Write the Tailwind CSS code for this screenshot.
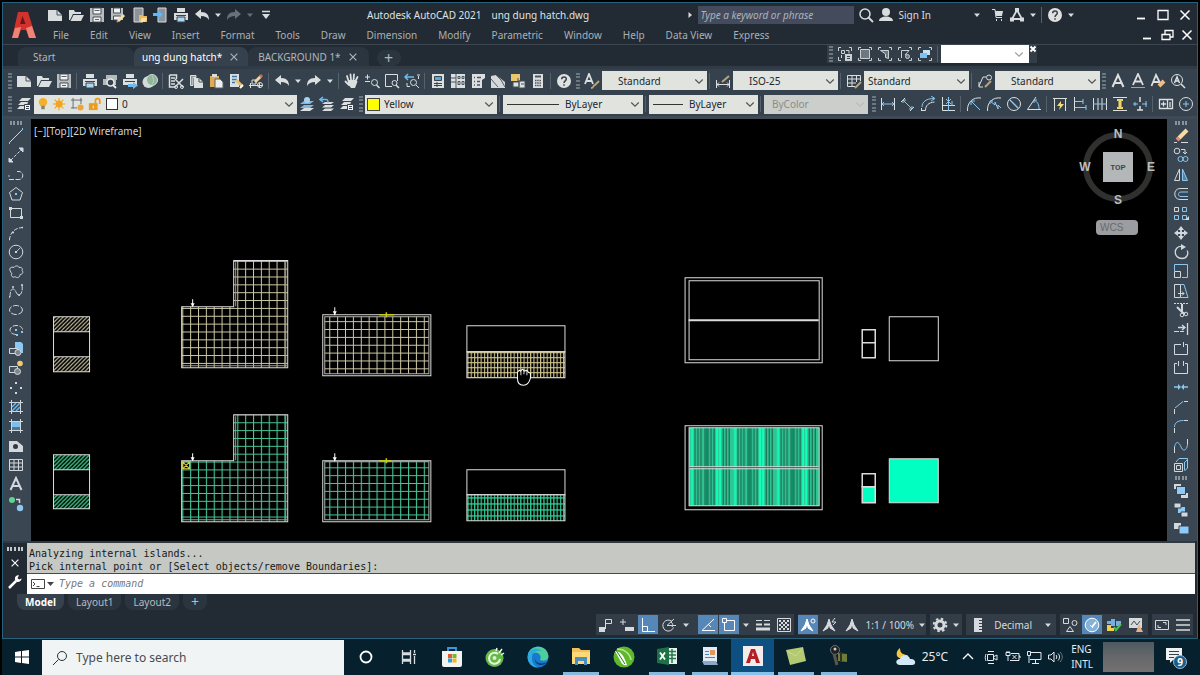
<!DOCTYPE html>
<html lang="en">
  <head>
    <meta charset="UTF-8" />
    <meta name="viewport" content="width=device-width, initial-scale=1.0" />
    <title>Autodesk AutoCAD 2021 - ung dung hatch.dwg</title>
    <script src="https://cdn.jsdelivr.net/npm/@tailwindcss/browser@4"></script>
  </head>
  <body class="flex h-screen flex-col overflow-hidden bg-black font-['Noto_Sans',sans-serif] text-[10px] leading-4 text-[#c3c7cb]">
    <!-- icon sheet -->
    <svg class="hidden" fill="none" stroke="currentColor">
      <symbol id="new" viewBox="0 0 16 16"><path d="M1 3h9l5 5v6H1z" fill="currentColor" stroke="none"/><path d="M10 3v5h5" stroke="#47515c"/></symbol>
      <symbol id="open" viewBox="0 0 16 16"><path d="M1 13V3h5l1 2h6v2H5l-3 6z" fill="currentColor" stroke="none"/><path d="M5.500 8H16l-3 6H2.500z" fill="currentColor" stroke="none"/></symbol>
      <symbol id="save" viewBox="0 0 16 16"><path d="M1 1h14v14H1z" fill="#b9bdc0" stroke="none"/><path d="M4 1h8v6H4zM4 10h8v5H4z" fill="#f1f3f3" stroke="#434c57"/><path d="M5.500 3.500h5M6 12.500h4" stroke="#59626b"/></symbol>
      <symbol id="saveas" viewBox="0 0 16 16"><path d="M1 1h12v12H1z" fill="#b9bdc0" stroke="none"/><path d="M3.500 1h7v5h-7zM3.500 9h7v4h-7z" fill="#f1f3f3" stroke="#434c57"/><path d="M8 14l6-6" stroke="#f3dfa8" stroke-width="3"/><path d="M7 15l1-1" stroke="#c96" stroke-width="2"/></symbol>
      <symbol id="openweb" viewBox="0 0 16 16"><path d="M3 1h9v14H3z" fill="#8c9399" stroke="#d9dcdd"/><path d="M8 8h3l1 1h4v6H8z" fill="#e8bd62" stroke="none"/><path d="M9 15l2-4h5l-2 4z" fill="#ffe09a" stroke="none"/></symbol>
      <symbol id="saveweb" viewBox="0 0 16 16"><path d="M6 1h8v14H6z" fill="#8c9399" stroke="#d9dcdd"/><path d="M1 6h5V3l5 4.500L6 12V9H1z" fill="#65b5ee" stroke="none"/></symbol>
      <symbol id="print" viewBox="0 0 16 16"><path d="M4 1h8v4H4zM1 6h14v7H1z" fill="currentColor" stroke="none"/><path d="M3 8.500h10" stroke="#38434e"/><path d="M4 10h8v5H4z" fill="#a9d8f5" stroke="#38434e"/></symbol>
      <symbol id="preview" viewBox="0 0 16 16"><path d="M4 2h11v5H4zM1 6h13v6H1z" fill="#b4b9bc" stroke="none"/><circle cx="8.500" cy="9.500" r="3.500" fill="#37424f" stroke="#e8eaea" stroke-width="1.500"/><path d="M11 12l3 3" stroke="#e8eaea" stroke-width="2"/></symbol>
      <symbol id="publish" viewBox="0 0 16 16"><path d="M4 1h8v4H4zM1 6h14v6H1z" fill="currentColor" stroke="none"/><path d="M3 8.500h10" stroke="#38434e"/><path d="M6 11h5V9l5 3.500-5 3.500v-2H6z" fill="#6dbaf0" stroke="none"/></symbol>
      <symbol id="globe" viewBox="0 0 16 16"><circle cx="6.500" cy="9" r="6" fill="#d3d9d7" stroke="none"/><circle cx="10" cy="7" r="5.500" fill="#8fb59a" stroke="#d5ded8"/><path d="M10 3c2 3 2 6 0 8" stroke="#b9d3c1"/></symbol>
      <symbol id="cut" viewBox="0 0 16 16"><path d="M1.500 2v12h6M1.500 2h7v4M3 5h4M3 8h4M3 11h4" stroke-width="1.500"/><path d="M7 6l8 8M15 6l-8 8" stroke-width="1.500"/><circle cx="14" cy="14" r="1.500"/><circle cx="8" cy="14" r="1.500"/></symbol>
      <symbol id="copy" viewBox="0 0 16 16"><path d="M2.500 2.500H8v2H5v8H2.500z" fill="#8d959c"/><path d="M6 5h5l4 4v6H6z" fill="currentColor" stroke="none"/><path d="M11 5v4h4" stroke="#47515c"/></symbol>
      <symbol id="paste" viewBox="0 0 16 16"><path d="M2 3h9v11H2z" fill="#e0ab54" stroke="none"/><path d="M4 1h5v3H4z" fill="#ddd" stroke="none"/><path d="M7 6h5l3 3v6H7z" fill="#edefef" stroke="#59626b"/></symbol>
      <symbol id="match" viewBox="0 0 16 16"><path d="M2 1h9v13H2z" fill="currentColor" stroke="none"/><path d="M4 3.500h5M4 6.500h5M4 9.500h3" stroke="#377aaa" stroke-width="1.500"/><path d="M8 7l6 6" stroke="#e8c06a" stroke-width="3"/><path d="M12 15l3-3" stroke="#fff" stroke-width="2"/></symbol>
      <symbol id="block" viewBox="0 0 16 16"><path d="M1 12.500h14M2.500 10v5M11.500 10v5M4 11V7h4v4z"/><circle cx="12" cy="12" r="2.500"/><path d="M7 9l6-6" stroke="#f0d7a0" stroke-width="3"/><path d="M12 4l2-2" stroke="#cf6b58" stroke-width="3"/></symbol>
      <symbol id="undo" viewBox="0 0 16 16"><path d="M1 7l6-5v3c6 0 8 3 8 8-2-3-4-4-8-4v3z" fill="currentColor" stroke="none"/></symbol>
      <symbol id="redo" viewBox="0 0 16 16"><path d="M15 7L9 2v3c-6 0-8 3-8 8 2-3 4-4 8-4v3z" fill="currentColor" stroke="none"/></symbol>
      <symbol id="pan" viewBox="0 0 16 16"><path d="M4.500 8L3 3M7 7L6.500 1.500M9.500 7l.5-5.500M11.500 8L13.500 4M1.500 8.500L5 12" stroke-width="1.800" stroke-linecap="round"/><path d="M4 7l8 0 1.500 1.500L11 15H7L4 11z" fill="currentColor" stroke="none"/></symbol>
      <symbol id="zoomrt" viewBox="0 0 16 16"><path d="M1 4h5M3.500 1.500v5M1 8.500h5"/><circle cx="10.500" cy="9.500" r="3"/><path d="M12.500 12l3 3" stroke-width="1.500"/></symbol>
      <symbol id="zoomwin" viewBox="0 0 16 16"><path d="M8 13.500H1.500v-12h12V8"/><circle cx="10.500" cy="10" r="2.500"/><path d="M12 12l3 3" stroke-width="1.500"/></symbol>
      <symbol id="zoomprev" viewBox="0 0 16 16"><path d="M1 4h9M4 1L1 4l3 3" stroke="#6dbaf0" stroke-width="1.500"/><path d="M3 10v3.500h3M14.500 6V3M13 2h3"/><circle cx="9.500" cy="9.500" r="3"/><path d="M12 12l3 3"/></symbol>
      <symbol id="props" viewBox="0 0 16 16"><path d="M2 1h12v14H2z" fill="currentColor" stroke="none"/><path d="M4.500 3.500h7v4h-7z" fill="#5ea5d8" stroke="#38434e"/><path d="M4 10.500h8M4 12.500h8M7 9v5" stroke="#38434e"/></symbol>
      <symbol id="dcenter" viewBox="0 0 16 16"><path d="M1 1h14v14H1z" fill="currentColor" stroke="none"/><path d="M6 1v14M1 5h5M1 9h5M8 3.500h2v2H8zM12 3.500h2v2h-2zM8 8.500h2v3H8zM12 8.500h2v3h-2z" stroke="#4a545e"/></symbol>
      <symbol id="palettes" viewBox="0 0 16 16"><path d="M2 1h13v4l-3 2v8H2z" fill="currentColor" stroke="none"/><path d="M4 4.500h1M7 4.500h4M4 8.500h1M7 8.500h3M4 12h1M7 12h3" stroke="#4a545e" stroke-width="1.500"/></symbol>
      <symbol id="sheets" viewBox="0 0 16 16"><path d="M1 3l5-1 9 7v6H1z" fill="#d5d9d8" stroke="none"/><path d="M6 2l5 5 4 7M1 6l7 8" stroke="#55606b"/></symbol>
      <symbol id="markup" viewBox="0 0 16 16"><path d="M1 1h9v7H1z" fill="#ecc66d" stroke="none"/><path d="M3 9h6v5H3zM9 8h6v7H9z" fill="#dce1e2" stroke="#47515c"/><path d="M11 11h3M8 5v3h3" stroke="#47515c"/></symbol>
      <symbol id="calc" viewBox="0 0 16 16"><path d="M3 1h10v14H3z" fill="currentColor" stroke="none"/><path d="M5 3.500h6" stroke="#4a545e" stroke-width="2"/><path d="M5 7.500h6M5 10h6M5 12.500h6" stroke="#4a545e" stroke-width="1.500" stroke-dasharray="1.500 .7"/></symbol>
      <symbol id="help" viewBox="0 0 16 16"><circle cx="8" cy="8" r="7" fill="#dfe1df" stroke="none"/><path d="M5.700 6.200c0-3 4.600-3 4.600-.2C10.300 8 8 7.700 8 10M8 11.200v1.600" stroke="#36404a" stroke-width="1.500"/></symbol>
      <symbol id="tstyle" viewBox="0 0 16 16"><path d="M1 11L5 1l4 10M2.500 8h5" stroke-width="1.800"/><path d="M7 15c3 0 2-3 4-3l4-4" stroke="#b8a57c" stroke-width="1.800"/></symbol>
      <symbol id="dstyle" viewBox="0 0 16 16"><path d="M1.500 7v8M14.500 7v8M2 11.500h12M4 9.500l-2 2 2 2M12 9.500l2 2-2 2"/><path d="M7 9l7-6" stroke="#b8a57c" stroke-width="2"/></symbol>
      <symbol id="table" viewBox="0 0 16 16"><path d="M1.500 2.500h13v11h-13zM1.500 6h13M1.500 10h13M6 2.500v11M10.500 2.500v11"/></symbol>
      <symbol id="tblstyle" viewBox="0 0 16 16"><path d="M1.500 2.500h13V8M9 13.500H1.500v-11M1.500 6h13M1.500 10H10M6 2.500v11M10.500 2.500V9"/><path d="M9 15l6-6" stroke="#b8a57c" stroke-width="2"/></symbol>
      <symbol id="mlstyle" viewBox="0 0 16 16"><path d="M2 13l4-9h3M2 9v5h4"/><circle cx="12" cy="4.500" r="2.500"/><path d="M8 14l6-6" stroke="#b8a57c" stroke-width="2"/></symbol>
      <symbol id="mtext" viewBox="0 0 16 16"><path d="M2.500 14L8 2l5.500 12M4.500 10h7" stroke-width="2"/></symbol>
      <symbol id="dtext" viewBox="0 0 16 16"><path d="M3 12L8 1l5 11M5 8.500h6" stroke-width="1.800"/><path d="M1 14.500h14" stroke="#6fb3de"/></symbol>
      <symbol id="etext" viewBox="0 0 16 16"><path d="M1.500 13L6 2l4 8M3 9h6" stroke-width="1.800"/><path d="M9 13l5-5" stroke="#eebd87" stroke-width="4"/></symbol>
      <symbol id="ftext" viewBox="0 0 16 16"><circle cx="7" cy="7" r="5.500"/><path d="M4.500 10L7 4l2.500 6M5.500 8h3M11 11l4 4" stroke-width="1.500"/></symbol>
      <symbol id="layers" viewBox="0 0 16 16"><path d="M3 5l3-3h9l-3 3zM2 9l3-3h7l-1 3zM1 13l3-3h4v3z" fill="currentColor" stroke="none"/><path d="M8.500 8.500h6v6h-6z" fill="#f3f4f4" stroke="#36414d"/><path d="M10 10.500h3M10 12.500h3" stroke="#36414d"/></symbol>
      <symbol id="laycur" viewBox="0 0 16 16"><path d="M1 8l4-3h10l-4 3zM1 12l4-3h10l-4 3z" fill="#7fb7de" stroke="none"/><path d="M1 15l4-3h10l-4 3z" fill="currentColor" stroke="none"/><circle cx="8" cy="4" r="3" fill="#a8d3f0" stroke="none"/></symbol>
      <symbol id="layprev" viewBox="0 0 16 16"><path d="M3 8l3-2h9l-3 2zM3 11.500l3-2.500h9l-3 2.500zM3 15l3-2.500h9L12 15z" fill="currentColor" stroke="none"/><path d="M1 3.500h6c2 0 2 1 2 3M4 1L1 3.500 4 6" stroke="#6dbaf0" stroke-width="1.500"/></symbol>
      <symbol id="bulb" viewBox="0 0 16 16"><circle cx="8" cy="6" r="4.800" fill="#f4b127" stroke="none"/><path d="M6 10h4v4H6z" fill="#8b8471" stroke="none"/></symbol>
      <symbol id="sun" viewBox="0 0 16 16"><circle cx="8" cy="8" r="4" fill="#f4a51b" stroke="none"/><path d="M8 1v14M1 8h14M3 3l10 10M13 3L3 13" stroke="#f4a51b" stroke-width="1.300"/></symbol>
      <symbol id="vpfreeze" viewBox="0 0 16 16"><path d="M3.500 1v12M1 3.500h13M12.500 1v7M1 12.500h7" stroke="#58616a"/><circle cx="12" cy="12" r="3.500" fill="#eaa63a" stroke="none"/></symbol>
      <symbol id="unlock" viewBox="0 0 16 16"><path d="M1 7h10v8H1z" fill="#e99d1f" stroke="none"/><path d="M8.500 7V4c0-3 5-3 5 0v4" stroke="#e99d1f" stroke-width="2"/><path d="M6 10v3" stroke="#fff"/></symbol>
      <!-- dimension toolbar -->
      <symbol id="linear" viewBox="0 0 16 16"><path d="M1.500 2v12M14.500 2v12"/><path d="M2 8h12M4 6L2 8l2 2M12 6l2 2-2 2" stroke="#8cc8f0"/></symbol>
      <symbol id="aligned" viewBox="0 0 16 16"><path d="M1 6l4-4M10 15l4-4"/><path d="M3 4l9 9M3 7V4h3M12 10v3H9" stroke="#8cc8f0"/></symbol>
      <symbol id="arclen" viewBox="0 0 16 16"><path d="M1.500 14.500h4c0-5 3-8 9-8.500M1.500 12v3"/><path d="M2 11C2 6 6 2.500 14 2.500M11 0l4 2.500L11 5" stroke="#8cc8f0"/></symbol>
      <symbol id="ordinate" viewBox="0 0 16 16"><path d="M2.500 1v13.500H15M2.500 9.500H15" /><path d="M8.500 1v14M6 3l5 5M11 3L6 8M12 5v5" stroke="#8cc8f0"/></symbol>
      <symbol id="radius" viewBox="0 0 16 16"><path d="M15 2C7 1 1 6 1.500 15"/><path d="M5 5l9 9M5 9V5h4" stroke="#8cc8f0"/></symbol>
      <symbol id="jogged" viewBox="0 0 16 16"><path d="M15 2C7 1 1 6 1.500 15"/><path d="M4 5l5 4v-3l3 7V9l3 3M4 8V5h3" stroke="#8cc8f0"/></symbol>
      <symbol id="diameter" viewBox="0 0 16 16"><circle cx="8" cy="8" r="6.500"/><path d="M3.500 3.500l9 9" stroke="#8cc8f0" stroke-width="1.300"/></symbol>
      <symbol id="angular" viewBox="0 0 16 16"><path d="M10 1L1.500 13.500H15"/><path d="M8 4c4 2 5 5 5 9M8 7V4h3" stroke="#8cc8f0"/></symbol>
      <symbol id="quick" viewBox="0 0 16 16"><path d="M1 2.500h14M2.500 3v12M13.500 3v12"/><path d="M9 5L5 10h3l-1 4 5-6H9z" fill="#f6dc6c" stroke="none"/></symbol>
      <symbol id="baseline" viewBox="0 0 16 16"><path d="M2.500 1v14"/><path d="M3 5.500h8M3 11.500h11M11 3v5M14 9v5" stroke="#8cc8f0"/></symbol>
      <symbol id="continue" viewBox="0 0 16 16"><path d="M1.500 2v12M6 2v12M10 2v12M14.500 2v12"/><path d="M1 8h14" stroke="#8cc8f0"/></symbol>
      <symbol id="dspace" viewBox="0 0 16 16"><path d="M1 1.500h14M1 14.500h14"/><path d="M5 3h6v2H9.500v6H11v2H5v-2h1.500V5H5z" fill="#f1d36c" stroke="none"/></symbol>
      <symbol id="dbreak" viewBox="0 0 16 16"><path d="M8 1v5M8 10v4M5 14h6" stroke-width="1.500"/><path d="M1 8h5M10 8h5M3 6v4M14 5v6" stroke="#8cc8f0"/></symbol>
      <symbol id="tolerance" viewBox="0 0 16 16"><path d="M1.500 3.500h13v9h-13zM9.500 3.500v9M3 8h5M5.500 5.500v5M12 6v5" stroke-width="1.300"/></symbol>
      <symbol id="center" viewBox="0 0 16 16"><circle cx="8" cy="8" r="6.500"/><path d="M8 5v6M5 8h6" stroke="#8cc8f0"/></symbol>
      <!-- viewport toolbar -->
      <symbol id="vpdlg" viewBox="0 0 16 16"><path d="M4 1.500H1.500V5M12 1.500h2.500V5M1.500 11v3.500H4M4.500 4.500h3v3h-3zM9 4.500h3v3M4.500 9v3"/><path d="M8 8h7v7H8z" fill="currentColor" stroke="none"/><path d="M10 10.500h3M10 12.500h3" stroke="#38434e"/></symbol>
      <symbol id="vpone" viewBox="0 0 16 16"><path d="M4 1.500H1.500V4M12 1.500h2.500V4M1.500 12v2.500H4M12 14.500h2.500V12"/><path d="M3.500 3.500h9v9h-9z" fill="#6e777f"/></symbol>
      <symbol id="vppoly" viewBox="0 0 16 16"><path d="M4 1.500H1.500V4M12 1.500h2.500V4M1.500 12v2.500H4M12 14.500h2.500V12"/><path d="M3.500 4.500h8v8l-3-1V8z" fill="#6e777f"/></symbol>
      <symbol id="vpobj" viewBox="0 0 16 16"><path d="M4 1.500H1.500V4M12 1.500h2.500V4M1.500 12v2.500H4M12 14.500h2.500V12M4.500 12V4.500H12L8 9"/><circle cx="10.500" cy="10.500" r="2" fill="#6e777f"/></symbol>
      <symbol id="vpclip" viewBox="0 0 16 16"><path d="M4 1.500H1.500V4M12 1.500h2.500V4M1.500 12v2.500H4M12 14.500h2.500V12"/><path d="M6 4h7v5H6z" fill="#c5e4fa" stroke="none"/><path d="M3 7h7v5H3z" fill="#7fc1f2" stroke="none"/></symbol>
      <!-- draw toolbar -->
      <symbol id="line" viewBox="0 0 16 16"><path d="M2 14L14 2"/><path d="M1 15h1M14 1h1" stroke="#8cc8f0" stroke-width="2"/></symbol>
      <symbol id="xline" viewBox="0 0 16 16"><path d="M3 13L13 3" stroke-dasharray="3 1.500"/><path d="M1 15v-4l4 4zM15 1v4l-4-4z" fill="currentColor"/></symbol>
      <symbol id="pline" viewBox="0 0 16 16"><path d="M1 12.500h10c5 0 5-8 0-8H9" stroke-dasharray="5 1.500"/><path d="M1 8v2" stroke="#8cc8f0"/></symbol>
      <symbol id="polygon" viewBox="0 0 16 16"><path d="M8 1.500l6.500 5L12 14H4L1.500 6.500z"/><path d="M7 8h2" stroke="#8cc8f0" stroke-width="2"/></symbol>
      <symbol id="rect" viewBox="0 0 16 16"><path d="M2.500 3.500h11v9h-11z"/><path d="M1 3.500h3M12 12.500h3" stroke-width="3"/></symbol>
      <symbol id="arc" viewBox="0 0 16 16"><path d="M1.500 15C2 8 6 3 15 2.500" stroke-dasharray="4 1.500"/><path d="M1 14.500h1M14 2.500h1M4 7.500h2" stroke-width="1.500"/></symbol>
      <symbol id="circle" viewBox="0 0 16 16"><circle cx="8" cy="8" r="6.800"/><path d="M8 8l4-4" stroke="#8cc8f0"/><path d="M7 8h2" stroke-width="2"/></symbol>
      <symbol id="cloud" viewBox="0 0 16 16"><path d="M3 8C0 5 3 2 6 3.500c2-3 5-1 5 0 3-1 4 2 3 3 2 2 0 4-2 4 0 3-3 4-5 2-2 2-5-1-3-3-1 0-1-1-1-1.500z"/></symbol>
      <symbol id="spline" viewBox="0 0 16 16"><path d="M2 14c0-5 1-8 3-8 3 0 3 6 6 6 2 0 4-4 3-10" stroke-dasharray="5 1"/><path d="M4 4h2M1 14h1M10 12h2M13 2h2" stroke-width="1.500"/></symbol>
      <symbol id="ellipse" viewBox="0 0 16 16"><ellipse cx="8" cy="8" rx="6.500" ry="4.500" stroke-dasharray="6 1.500"/></symbol>
      <symbol id="earc" viewBox="0 0 16 16"><path d="M8 12.500C0 12 0 4 8 3.500c4 0 7 2 6.500 5" stroke-dasharray="5 1.500"/><path d="M7 8h2M8 13h2M13 10h2" stroke="#8cc8f0" stroke-width="2"/></symbol>
      <symbol id="insert" viewBox="0 0 16 16"><path d="M7 1h6l2 2v9H7z" fill="#8cc8f0" stroke="none"/><path d="M1.500 7.500h8v5h-8z" fill="#47515c"/><circle cx="10" cy="11.500" r="3" fill="#7d868d"/></symbol>
      <symbol id="mkblock" viewBox="0 0 16 16"><path d="M1.500 6.500h8v6h-8z" fill="#47515c"/><circle cx="9.500" cy="11.500" r="3" fill="#7d868d"/><circle cx="12" cy="3.500" r="2.800" fill="#f2cb6d" stroke="none"/></symbol>
      <symbol id="point" viewBox="0 0 16 16"><path d="M7 3h2M2 8h2M12 8h2M7 13h2" stroke-width="1.800"/></symbol>
      <symbol id="hatch" viewBox="0 0 16 16"><path d="M3.500 1v14M12.500 1v14M1 3.500h14M1 12.500h14"/><path d="M4 8l4-4M4 12l8-8M8 12l4-4" stroke="#6db7ec" stroke-width="1.500"/></symbol>
      <symbol id="gradient" viewBox="0 0 16 16"><path d="M4 4h8v5H4z" fill="#7ebfed" stroke="none"/><path d="M4 9h8v3H4z" fill="#4d7897" stroke="none"/><path d="M3.500 1v14M12.500 1v14M1 3.500h14M1 12.500h14"/></symbol>
      <symbol id="region" viewBox="0 0 16 16"><path d="M1 3h8l6 5v6H1z" fill="currentColor" stroke="none"/><circle cx="7.500" cy="8.500" r="2.500" fill="#303a46" stroke="none"/></symbol>
      <symbol id="addsel" viewBox="0 0 16 16"><circle cx="4" cy="4" r="3" fill="#61d492" stroke="none"/><circle cx="12" cy="12" r="3.200" fill="#8cc8f0" stroke="none"/><path d="M8 3.500h3.500V7" stroke-width="1.500"/></symbol>
      <!-- modify toolbar -->
      <symbol id="erase" viewBox="0 0 16 16"><path d="M6 10l8-8" stroke="#f6dca0" stroke-width="4"/><path d="M4 12l2-2" stroke="#e58a8a" stroke-width="4"/><path d="M1 14.500h3M8 14.500h7"/></symbol>
      <symbol id="mcopy" viewBox="0 0 16 16"><circle cx="4" cy="4" r="2.800"/><path d="M8 2.500h4V7M10 5l2 2 2-2"/><circle cx="7.500" cy="12" r="2.500" stroke="#8cc8f0"/><circle cx="12.500" cy="12" r="2.500" stroke="#8cc8f0"/></symbol>
      <symbol id="mirror" viewBox="0 0 16 16"><path d="M6.500 2v11.500H1.500z"/><path d="M9.500 2v11.500h5z" stroke="#8cc8f0" fill="#51829f"/></symbol>
      <symbol id="offset" viewBox="0 0 16 16"><path d="M15 2.500H7c-7 0-7 11 0 11h8" /><path d="M15 6H8c-3.500 0-3.500 4.500 0 4.500h7" stroke="#8cc8f0"/></symbol>
      <symbol id="array" viewBox="0 0 16 16"><path d="M1.500 2.500h4v4h-4z"/><path d="M9.500 2.500h4v4h-4zM1.500 10.500h4v4h-4zM9.500 10.500h4v4h-4z" stroke="#8cc8f0"/><path d="M12 15h4v-4z" fill="currentColor" stroke="none"/></symbol>
      <symbol id="move" viewBox="0 0 16 16"><path d="M8 3v10M3 8h10" stroke-width="1.800"/><path d="M8 1l3 4H5zM8 15l3-4H5zM1 8l4-3v6zM15 8l-4-3v6z" fill="currentColor" stroke="none"/></symbol>
      <symbol id="rotate" viewBox="0 0 16 16"><path d="M9 2.500c-9-1-9 12 0 12 5 0 7-5 5-8" stroke-width="1.300"/><path d="M8 0l5 3-5 3z" fill="currentColor" stroke="none"/></symbol>
      <symbol id="scale" viewBox="0 0 16 16"><path d="M1.500 8V1.500h13v13H9" stroke="#8cc8f0"/><path d="M1.500 8.500h6v6h-6z"/></symbol>
      <symbol id="stretch" viewBox="0 0 16 16"><path d="M1.500 1.500h6v13h-6z"/><path d="M8 1.500h3l4 13H8" stroke="#8cc8f0"/><path d="M5 10.500h6M9 8.500l2 2-2 2"/></symbol>
      <symbol id="trim" viewBox="0 0 16 16"><path d="M1 1.500h14" stroke-dasharray="2 1"/><path d="M9 2v8l3 2M4 5l5 5" stroke-width="2"/><circle cx="13" cy="12" r="1.800"/><circle cx="9" cy="13" r="1.800"/></symbol>
      <symbol id="extend" viewBox="0 0 16 16"><path d="M14.500 2v12M5 6.500h7M9 4l3 2.500L9 9" stroke-width="1.300"/><path d="M1 10.500h10" stroke-dasharray="5 1"/></symbol>
      <symbol id="breakpt" viewBox="0 0 16 16"><path d="M8 3.500H1.500v10h13v-10H12M10.500 1v5"/></symbol>
      <symbol id="break" viewBox="0 0 16 16"><path d="M4 3.500H1.500v10h13v-10H12M5.500 1v5M10.500 1v5"/></symbol>
      <symbol id="join" viewBox="0 0 16 16"><path d="M1 8h6M9 8h6" stroke="#8cc8f0" stroke-width="1.500"/><path d="M5 5l3 3-3 3zM11 5L8 8l3 3z" fill="#8cc8f0" stroke="none"/></symbol>
      <symbol id="chamfer" viewBox="0 0 16 16"><path d="M1.500 15v-5M11 2.500h4"/><path d="M2 9l8-6.500" stroke="#8cc8f0"/></symbol>
      <symbol id="fillet" viewBox="0 0 16 16"><path d="M1.500 15v-5M11 2.500h4"/><path d="M1.500 9c0-4 3-6.500 9-6.500" stroke="#8cc8f0"/></symbol>
      <symbol id="blend" viewBox="0 0 16 16"><path d="M1.500 15V9M14.500 1v6"/><path d="M1.500 9c2-8 5-4 7 1 3 5 6 0 6-4" stroke="#8cc8f0"/></symbol>
      <symbol id="explode" viewBox="0 0 16 16"><path d="M1.500 6.500h8v8h-8zM3.500 8.500h4v4h-4z"/><path d="M3 5l3-3.500h8.500V11l-3 3M11 6l3-3M11.500 6v7" stroke="#8cc8f0"/></symbol>
      <symbol id="front" viewBox="0 0 16 16"><path d="M1 1h7v5H1zM8 10h7v5H8z" fill="currentColor" stroke="none"/><path d="M3.500 3.500h9v8h-9z" fill="#8ccbfa" stroke="#34404d"/></symbol>
      <symbol id="above" viewBox="0 0 16 16"><path d="M5 5h7v6H5z" fill="#8ccbfa" stroke="none"/><path d="M1 1h7v5H1zM8 10h7v5H8z" fill="currentColor" stroke="#34404d"/></symbol>
      <symbol id="under" viewBox="0 0 16 16"><path d="M1 2h7v6H1z" fill="currentColor" stroke="none"/><path d="M6 5h10v8H6z" fill="#8ccbfa" stroke="#34404d"/></symbol>
      <!-- status bar -->
      <symbol id="modelsp" viewBox="0 0 16 16"><path d="M1 10h6v5H1z" fill="currentColor" stroke="none"/><path d="M7.500 12V2.500h6v4h-6"/></symbol>
      <symbol id="dyn" viewBox="0 0 16 16"><path d="M1 5h6M4 2v6"/><path d="M6 10h9v4H6z" fill="currentColor" stroke="none"/></symbol>
      <symbol id="ortho" viewBox="0 0 16 16"><path d="M2.500 1v13.500H15M2.500 9.500h5v5"/></symbol>
      <symbol id="polar" viewBox="0 0 16 16"><path d="M11 4.500a5.500 5.500 0 1 0 1.500 6M6 8.500h9M6 8.500L13 2M10 5c2 1 2 4 1 5"/></symbol>
      <symbol id="track" viewBox="0 0 16 16"><path d="M14 2L2 13.500h13M8 7l3 3"/></symbol>
      <symbol id="osnap" viewBox="0 0 16 16"><path d="M5 3.500h8.500v10h-10V5"/><path d="M1.500 1.500h4v4h-4z"/></symbol>
      <symbol id="lwt" viewBox="0 0 16 16"><path d="M1 3.500h6M9 3.500h6"/><path d="M1 7.500h6M9 7.500h6" stroke-width="2"/><path d="M1 12h14" stroke-width="3"/></symbol>
      <symbol id="transp" viewBox="0 0 16 16"><path d="M1.500 1.500h13v13h-13z"/><path d="M3 4h10M3 8h10M3 12h10" stroke-width="2" stroke-dasharray="2 2"/><path d="M5 6h8M5 10h8" stroke-width="2" stroke-dasharray="2 2"/></symbol>
      <symbol id="annovis" viewBox="0 0 16 16"><path d="M7 2l2 6 4 6-5-3V9H6v2l-5 3 4-6z" fill="currentColor" stroke="currentColor"/><circle cx="13" cy="4" r="2"/></symbol>
      <symbol id="annoauto" viewBox="0 0 16 16"><path d="M7 2l2 6 4 6-5-3V9H6v2l-5 3 4-6z" fill="currentColor" stroke="currentColor"/><path d="M13 1l-3 4h4l-3 3"/></symbol>
      <symbol id="annoscale" viewBox="0 0 16 16"><path d="M8 2l2 6 4 6-5-3V9H7v2l-5 3 4-6z" fill="currentColor" stroke="currentColor"/></symbol>
      <symbol id="gear" viewBox="0 0 16 16"><circle cx="8" cy="8" r="4" stroke-width="3"/><circle cx="8" cy="8" r="6.300" stroke-width="2" stroke-dasharray="2.500 2.450"/></symbol>
      <symbol id="ruler" viewBox="0 0 16 16"><path d="M4 1h8v2H9v1h3v2H9v1h3v2H9v1h3v2H9v1h3v2H4z" fill="currentColor" stroke="none"/></symbol>
      <symbol id="qprops" viewBox="0 0 16 16"><path d="M1.500 1.500h5v5h-5zM8 9.500l3.500 5h-7z"/><circle cx="12.500" cy="6" r="2.500"/></symbol>
      <symbol id="isolate" viewBox="0 0 16 16"><circle cx="8" cy="8" r="6.800" fill="#86b2d8" stroke="#fff"/><path d="M8 10l4-5" stroke="#fff" stroke-width="1.800"/><path d="M6 8l3 3" stroke="#fff"/></symbol>
      <symbol id="perf" viewBox="0 0 16 16"><path d="M1 4h7v3H1zM5 2h4v7H5zM10 4h5v5h-5z" fill="#75aee0" stroke="none"/><path d="M1 8h4v3h3v3H1z" fill="#f3cf4d" stroke="none"/><path d="M8 10l2 3 5-6" stroke="#45c052" stroke-width="2"/></symbol>
      <symbol id="isodraft" viewBox="0 0 16 16"><path d="M1 1h13v10H1z" fill="currentColor" stroke="none"/><path d="M3 8l3-4 3 4 3-4" stroke="#444e58"/><path d="M11 7l4 8H8z" fill="#e5b188" stroke="none"/></symbol>
      <symbol id="clean" viewBox="0 0 16 16"><path d="M1.500 3.500h13v9h-13zM4 8v2.500h3M9 5.500h3V8"/></symbol>
      <symbol id="menu" viewBox="0 0 16 16"><path d="M1 3h14M1 8h14M1 13h14" stroke-width="1.500"/></symbol>
      <!-- window chrome -->
      <symbol id="caret" viewBox="0 0 8 8"><path d="M1 2.500h6L4 6z" fill="currentColor" stroke="none"/></symbol>
      <symbol id="chev" viewBox="0 0 8 8"><path d="M1.500 3L4 5.500 6.500 3" stroke-width=".8"/></symbol>
      <symbol id="custom" viewBox="0 0 16 16"><path d="M4 4.500h8" stroke-width="1.500"/><path d="M4 7h8l-4 5z" fill="currentColor" stroke="none"/></symbol>
      <symbol id="find" viewBox="0 0 16 16"><circle cx="7" cy="7" r="5" stroke-width="1.500"/><path d="M10.500 10.500L15 15" stroke-width="1.800"/></symbol>
      <symbol id="user" viewBox="0 0 16 16"><circle cx="8" cy="5" r="4" fill="currentColor" stroke="none"/><path d="M1 14c0-6 14-6 14 0z" fill="currentColor" stroke="none"/></symbol>
      <symbol id="cart" viewBox="0 0 16 16"><path d="M3 2.500h3l1 8h6"/><path d="M6 4h8l-1 5H7z" fill="currentColor" stroke="none"/><path d="M7 13h1M12 13h1" stroke-width="2"/></symbol>
      <symbol id="a360" viewBox="0 0 16 16"><path d="M8 3L3 12h10z" stroke-width="1.800"/><path d="M6 3h4M1 12.500h4M11 12.500h4" stroke-width="4"/></symbol>
      <symbol id="min" viewBox="0 0 16 16"><path d="M4 11.500h8" stroke-width="1.800"/></symbol>
      <symbol id="max" viewBox="0 0 16 16"><path d="M3 3.500h10v9H3z" stroke-width="1.300"/></symbol>
      <symbol id="restore" viewBox="0 0 16 16"><path d="M3 7.500h8v5H3zM6 7V3.500h8V10h-3" stroke-width="1.300"/></symbol>
      <symbol id="close" viewBox="0 0 16 16"><path d="M3.500 3.500l9 9M12.500 3.500l-9 9" stroke-width="1.500"/></symbol>
      <symbol id="wrench" viewBox="0 0 16 16"><path d="M2 14l7-7" stroke-width="2.500"/><path d="M14.500 4.500c0 4-6 5-6.500 1S11 1 12 1.500L10.500 4l1.500 1.500z" fill="currentColor" stroke="none"/></symbol>
    </svg>

    <div class="mx-[2px] mt-[2px] flex min-h-0 flex-1 flex-col border border-[#27617a] bg-[#222b33]">
      <header class="flex border-b border-[#3b4650]">
        <button aria-label="Application menu" class="ml-1 w-8 shrink-0">
          <svg viewBox="0 0 32 36" class="w-8">
            <path d="M5 32L11 6h10l8 26h-7l-3-8h-5l-3 8z" fill="#d2312c" />
            <path d="M5 32l3-10 6-1-3 11zM22 32l-3-10 6-2 4 12z" fill="#ef8377" />
            <path d="M13 18l2.500-8 3 8z" fill="#65171b" />
          </svg>
        </button>
        <div class="min-w-0 flex-1">
          <div class="flex h-[23px] items-center">
            <div class="ml-1.5 flex w-[322px] shrink-0 items-center text-[#d9dcdd]">
              <div class="flex items-center gap-px" data-tools="new open save saveas openweb saveweb print undo"></div>
              <div class="flex items-center" data-tools="v"></div>
              <div class="flex items-center text-[#66717a]" data-tools="redo v"></div>
              <div class="flex items-center" data-tools="custom"></div>
            </div>
            <h1 class="flex gap-2.5 text-[#dfe2e4] whitespace-nowrap"><span>Autodesk AutoCAD 2021</span><span>ung dung hatch.dwg</span></h1>
            <div class="ml-auto flex items-center text-[#d9dcdd]">
              <svg class="mr-1 size-2 -rotate-90"><use href="#caret" /></svg>
              <input type="search" aria-label="Search help" placeholder="Type a keyword or phrase" class="h-[18px] w-[156px] bg-[#434b5d] px-0.5 italic outline-none placeholder:text-[#aeb4bd]" />
              <button aria-label="Search" class="ml-0.5 flex w-5 justify-center"><svg class="size-4" fill="none" stroke="currentColor"><use href="#find" /></svg></button>
              <button class="flex items-center gap-1 pl-0.5"><svg class="size-4" fill="none" stroke="currentColor"><use href="#user" /></svg>Sign In</button>
              <div class="mr-1 ml-[40px] flex items-center" data-tools="v"></div>
              <div class="flex items-center" data-tools="cart a360 v | help v"></div>
              <div class="mr-0.5 ml-[54px] flex items-center gap-0.5 text-white" data-tools="min max close"></div>
            </div>
          </div>
          <div class="flex h-[18px] items-center">
            <nav class="ml-[14px] flex gap-[21px] whitespace-nowrap text-[#aab0b7]">
              <a href="#">File</a><a href="#">Edit</a><a href="#">View</a><a href="#">Insert</a><a href="#">Format</a><a href="#">Tools</a><a href="#">Draw</a><a href="#">Dimension</a><a href="#">Modify</a><a href="#">Parametric</a><a href="#">Window</a><a href="#">Help</a><a href="#">Data View</a><a href="#">Express</a>
            </nav>
            <div class="ml-auto flex text-white" data-tools="min restore close"></div>
          </div>
        </div>
      </header>

      <!-- file tabs -->
      <div class="flex h-[24px] border-b-[3px] border-[#303b46]">
        <div class="flex items-end whitespace-nowrap pl-[15px] text-[#b1b6bb]">
          <button class="h-[19px] w-[116px] rounded-t-lg bg-[#2b353f] px-[15px] text-left">Start</button>
          <div class="flex h-[19px] items-center gap-1.5 rounded-t-lg bg-[#35414d] px-2 text-white"><button>ung dung hatch*</button><button aria-label="Close tab" class="text-[#aeb4ba]"><svg class="size-3" fill="none" stroke="currentColor"><use href="#close" /></svg></button></div>
          <div class="flex h-[19px] items-center gap-1.5 rounded-t-lg bg-[#2b353f] px-2.5"><button>BACKGROUND 1*</button><button aria-label="Close tab"><svg class="size-3" fill="none" stroke="currentColor"><use href="#close" /></svg></button></div>
          <button class="ml-2 h-4 w-6 rounded-full bg-[#2b353f] text-base leading-4">+</button>
        </div>
        <div class="mr-[160px] ml-auto flex h-[18px] items-center bg-[#323d48] text-[#cbd0d3]">
          <div class="flex items-center" data-tools=": vpdlg vpone vppoly vpobj vpclip |"></div>
          <label class="flex h-[18px] w-[88px] items-center bg-white pr-1 text-[#9a9e9e]"><select aria-label="Viewport scale" class="w-full min-w-0 flex-1 appearance-none"><option></option></select><svg class="size-3" fill="none" stroke="currentColor"><use href="#chev" /></svg></label>
          <button aria-label="Close toolbar" class="self-start text-white"><svg class="size-2" fill="none" stroke="currentColor" viewBox="0 0 8 8"><path d="M1.500 1.500l5 5M6.500 1.500l-5 5" stroke-width="2" /></svg></button>
        </div>
      </div>

      <!-- toolbars -->
      <div class="flex h-[23px] items-center overflow-hidden bg-[#35414d] pl-[3px] text-[#dcdfdf]">
        <div class="flex shrink-0 items-center" data-tools=": new open save | print preview publish globe | cut copy paste match block | undo v redo v | pan zoomrt zoomwin zoomprev | props dcenter palettes sheets markup calc | help : tstyle"></div>
        <label class="flex h-[19px] w-[105px] shrink-0 items-center bg-[#e1e3df] pr-0.5 pl-4 text-[#22272c]"><select aria-label="Text style" class="w-full min-w-0 appearance-none"><option>Standard</option></select><svg class="size-3 shrink-0" fill="none" stroke="#555"><use href="#chev" /></svg></label>
        <div class="flex shrink-0 items-center" data-tools="| dstyle"></div>
        <label class="flex h-[19px] w-[105px] shrink-0 items-center bg-[#e1e3df] pr-0.5 pl-4 text-[#22272c]"><select aria-label="Dimension style" class="w-full min-w-0 appearance-none"><option>ISO-25</option></select><svg class="size-3 shrink-0" fill="none" stroke="#555"><use href="#chev" /></svg></label>
        <div class="flex shrink-0 items-center" data-tools="| tblstyle"></div>
        <label class="flex h-[19px] w-[105px] shrink-0 items-center bg-[#e1e3df] pr-0.5 pl-1 text-[#22272c]"><select aria-label="Table style" class="w-full min-w-0 appearance-none"><option>Standard</option></select><svg class="size-3 shrink-0" fill="none" stroke="#555"><use href="#chev" /></svg></label>
        <div class="flex shrink-0 items-center" data-tools="| mlstyle"></div>
        <label class="flex h-[19px] w-[105px] shrink-0 items-center bg-[#e1e3df] pr-0.5 pl-4 text-[#22272c]"><select aria-label="Multileader style" class="w-full min-w-0 appearance-none"><option>Standard</option></select><svg class="size-3 shrink-0" fill="none" stroke="#555"><use href="#chev" /></svg></label>
        <div class="flex shrink-0 items-center" data-tools=": mtext dtext etext ftext"></div>
      </div>
      <div class="flex h-[27px] items-center overflow-hidden border-b-[3px] border-[#3f4a55] bg-[#35414d] pl-[3px] text-[#dcdfdf]">
        <div class="flex shrink-0 items-center" data-tools=": layers"></div>
        <label class="flex h-[19px] w-[263px] shrink-0 items-center gap-0.5 bg-[#e1e3df] pr-0.5 pl-0.5 text-[#22272c]">
          <svg class="size-[14px] shrink-0"><use href="#bulb" /></svg>
          <svg class="size-[14px] shrink-0"><use href="#sun" /></svg>
          <svg class="mx-0.5 size-[14px] shrink-0" fill="none"><use href="#vpfreeze" /></svg>
          <svg class="size-[14px] shrink-0" fill="none"><use href="#unlock" /></svg>
          <span class="mx-0.5 size-3 shrink-0 border border-[#333] bg-white"></span>
          <select aria-label="Layer" class="w-full min-w-0 appearance-none"><option>0</option></select>
          <svg class="size-3 shrink-0" fill="none" stroke="#555"><use href="#chev" /></svg>
        </label>
        <div class="flex shrink-0 items-center" data-tools="laycur layprev layers :"></div>
        <label class="flex h-[19px] w-[132px] shrink-0 items-center gap-1 bg-[#e1e3df] pr-0.5 pl-0.5 text-[#22272c]"><span class="size-[13px] shrink-0 border border-[#444] bg-[#ffff00]"></span><select aria-label="Color" class="w-full min-w-0 appearance-none"><option>Yellow</option></select><svg class="size-3 shrink-0" fill="none" stroke="#555"><use href="#chev" /></svg></label>
        <div class="flex" data-tools="|"></div>
        <label class="flex h-[19px] w-[140px] shrink-0 items-center gap-1.5 bg-[#e1e3df] pr-0.5 pl-1 text-[#22272c]"><span class="h-px w-[52px] shrink-0 bg-[#333]"></span><select aria-label="Linetype" class="w-full min-w-0 appearance-none"><option>ByLayer</option></select><svg class="size-3 shrink-0" fill="none" stroke="#555"><use href="#chev" /></svg></label>
        <div class="flex" data-tools="|"></div>
        <label class="flex h-[19px] w-[109px] shrink-0 items-center gap-1.5 bg-[#e1e3df] pr-0.5 pl-1 text-[#22272c]"><span class="h-px w-[30px] shrink-0 bg-[#333]"></span><select aria-label="Lineweight" class="w-full min-w-0 appearance-none"><option>ByLayer</option></select><svg class="size-3 shrink-0" fill="none" stroke="#555"><use href="#chev" /></svg></label>
        <div class="flex" data-tools="|"></div>
        <label class="flex h-[19px] w-[104px] shrink-0 items-center bg-[#cccecb] pr-0.5 pl-2 text-[#8a8d8c]"><select aria-label="Plot style" disabled class="w-full min-w-0 appearance-none"><option>ByColor</option></select><svg class="size-3 shrink-0" fill="none" stroke="#bbb"><use href="#chev" /></svg></label>
        <div class="ml-0.5 flex shrink-0 items-center" data-tools=": linear aligned arclen ordinate | radius jogged diameter angular | quick baseline continue dspace dbreak | tolerance center"></div>
      </div>

      <div class="flex min-h-0 flex-1 bg-[#3a4651]">
        <div class="flex w-7 shrink-0 flex-col items-center pr-[3px] text-[#d3d8dc]">
          <div class="my-0.5 h-1 w-3 shrink-0 border-y-2 border-dotted border-[#89939b]"></div>
          <div class="flex h-[386px] shrink-0 flex-col justify-between" data-tools="line xline pline polygon rect arc circle cloud spline ellipse earc insert mkblock point hatch gradient region table mtext addsel"></div>
        </div>

        <main class="relative min-w-0 flex-1 bg-black">
          <p class="absolute top-1 left-[3px] text-[#d4d4d4]">[−][Top][2D Wireframe]</p>
          <!-- model space -->
          <svg viewBox="31 119 1135 421" preserveAspectRatio="xMinYMin meet" class="h-full w-full" fill="none" stroke="#dcdcdc">
            <defs>
              <pattern id="diagY" width="4" height="4" patternUnits="userSpaceOnUse"><path d="M-1 5L5-1M-1 1L1-1M3 5L5 3" stroke="#d0c8a4" /></pattern>
              <pattern id="diagG" width="4" height="4" patternUnits="userSpaceOnUse"><path d="M-1 5L5-1M-1 1L1-1M3 5L5 3" stroke="#35b980" stroke-width="1.500" /></pattern>
              <pattern id="gridY" x="190" y="268.500" width="7.850" height="7.850" patternUnits="userSpaceOnUse"><path d="M.5 0v8M0 .5h8" stroke="#cfc9a4" /></pattern>
              <pattern id="gridG" x="190" y="422" width="7.850" height="7.850" patternUnits="userSpaceOnUse"><path d="M.5 0v8M0 .5h8" stroke="#48c698" stroke-width="1.200" /></pattern>
              <pattern id="gridY2" x="329" y="321" width="7.870" height="7.850" patternUnits="userSpaceOnUse"><path d="M.5 0v8M0 .5h8" stroke="#cfc9a4" /></pattern>
              <pattern id="gridG2" x="329" y="467" width="7.870" height="7.850" patternUnits="userSpaceOnUse"><path d="M.5 0v8M0 .5h8" stroke="#48c698" stroke-width="1.200" /></pattern>
              <pattern id="fineY" x="467" y="352" width="3.300" height="5" patternUnits="userSpaceOnUse"><path d="M.5 0v5M0 .5h4" stroke="#d3c890" stroke-width="1.200" /></pattern>
              <pattern id="fineG" x="467" y="497" width="3.300" height="6" patternUnits="userSpaceOnUse"><path d="M.5 0v6M0 .5h4" stroke="#35cf98" stroke-width="1.500" /></pattern>
              <pattern id="stripes" x="689" y="428" width="43" height="8" patternUnits="userSpaceOnUse">
                <path d="M0 0h43v8H0z" fill="#2fc493" stroke="none" />
                <path d="M2.500 0v8M27.500 0v8M30.500 0v8M44.500 0v8" stroke="#10ffba" stroke-width="2" />
                <path d="M5.500 0v8M8.500 0v8M11.500 0v8M15.500 0v8M18.500 0v8M21.500 0v8M24.500 0v8M33.500 0v8M36.500 0v8M39.500 0v8" stroke="#155a43" />
                <path d="M17 0v8" stroke="#0b8c63" stroke-width="2" />
              </pattern>
            </defs>

            <path d="M53.500 316.500h36v15h-36zM53.500 356.500h36v15h-36z" fill="url(#diagY)" />
            <path d="M53.500 331v26M89.500 331v26" />
            <path d="M53.500 454.500h36v15h-36zM53.500 494.500h36v14h-36z" fill="url(#diagG)" />
            <path d="M53.500 469v26M89.500 469v26" />

            <path d="M181.500 306.500h52v-46h54v107h-106z" fill="url(#gridY)" />
            <path d="M235.500 262v44M181.500 365.500h106M285.500 261v106" stroke="#9b9b94" />
            <path d="M192.500 299v7" stroke="#fff" /><path d="M190.500 303h4l-2 4z" fill="#fff" stroke="none" />
            <path d="M181.500 460.500h52v-46h54v107h-106z" fill="url(#gridG)" />
            <path d="M235.500 416v44M181.500 519.500h106M285.500 415v106" stroke="#9b9b94" />
            <path d="M192.500 453v7" stroke="#fff" /><path d="M190.500 457h4l-2 4z" fill="#fff" stroke="none" />
            <path d="M182.500 461.500h7v7h-7zM182.500 461.500l7 7M189.500 461.500l-7 7" stroke="#d8d04a" />

            <path d="M324.500 316.500h104v57h-104z" fill="url(#gridY2)" stroke="#b5b5ad" /><path d="M322.500 314.500h108v61h-108z" />
            <path d="M334.500 307v8" stroke="#fff" /><path d="M332.500 311h4l-2 4z" fill="#fff" stroke="none" />
            <path d="M379 314.500h15M386 312v5" stroke="#c9c920" stroke-width="1.500" />
            <path d="M324.500 461.500h104v58h-104z" fill="url(#gridG2)" stroke="#a5b5ad" /><path d="M322.500 460.500h108v61h-108z" />
            <path d="M334.500 453v8" stroke="#fff" /><path d="M332.500 457h4l-2 4z" fill="#fff" stroke="none" />
            <path d="M379 460.500h12M386 458v5" stroke="#c9c920" stroke-width="1.500" />

            <path d="M466.500 325.500h98v26h-98z" /><path d="M466.500 351.500h98v26h-98z" fill="url(#fineY)" />
            <path d="M466.500 469.500h98v25h-98z" /><path d="M466.500 494.500h98v26h-98z" fill="url(#fineG)" />

            <path d="M684.500 277.500h137v85h-137zM688.500 280.500h130v79h-130z" /><path d="M688 320h130" stroke-width="2" />
            <path d="M684.500 425.500h137v84h-137z" /><path d="M688.500 427.500h130v78h-130z" fill="url(#stripes)" />
            <path d="M689 467.500h129" stroke="#06382a" /><path d="M689 466.500h129M689 468.500h129" />

            <path d="M861.500 329.500h13v28h-13zM861 342.500h14" stroke-width="1.500" />
            <path d="M861.500 486.500h13v16h-13z" fill="#00ffc0" stroke-width="1.500" /><path d="M861.500 473.500h13v13h-13z" stroke-width="1.500" />
            <path d="M888.500 316.500h49v44h-49z" /><path d="M888.500 458.500h49v44h-49z" fill="#00ffc0" />

            <!-- pan cursor -->
            <path d="M517 375v-3l2-2 1 1 2-2 2 2 2-1 2 2 2 1v5c-1 4-3 7-7 7s-6-3-6-7z" fill="#000" stroke="#fff" />
            <path d="M520.500 370v5M523.500 369v5M526.500 370v5" stroke="#ddd" />
          </svg>

          <!-- view cube -->
          <div class="absolute top-2 right-3 flex w-[76px] flex-col items-center gap-[11px]">
            <svg viewBox="0 0 76 82" class="w-[76px] font-['Liberation_Sans',sans-serif] text-[12px] font-bold" text-anchor="middle">
              <circle cx="39" cy="40" r="32" fill="none" stroke="#30312f" stroke-width="6" />
              <path d="M24 25h30v30H24z" fill="#b4b7b7" />
              <g fill="#bdbdbd"><text x="39" y="11">N</text><text x="39" y="77">S</text><text x="6" y="44">W</text><text x="72" y="44">E</text></g>
              <text x="39" y="43" fill="#43484b" class="font-['Roboto',sans-serif] text-[8px]">TOP</text>
            </svg>
            <button class="h-[15px] w-[42px] rounded-sm bg-[#9b9da0] pl-1 text-left font-['Liberation_Sans',sans-serif] text-[10px] leading-[14px] text-[#686b6f]">WCS</button>
          </div>
        </main>

        <div class="flex w-[30px] shrink-0 flex-col items-center overflow-hidden pr-[3px] text-[#d3d8dc]">
          <div class="my-0.5 h-1 w-3 shrink-0 border-y-2 border-dotted border-[#89939b]"></div>
          <div class="flex h-[347px] shrink-0 flex-col justify-between" data-tools="erase mcopy mirror offset array move rotate scale stretch trim extend breakpt break join chamfer fillet blend explode"></div>
          <div class="my-0.5 h-1 w-3 shrink-0 border-y-2 border-dotted border-[#89939b]"></div>
          <div class="flex shrink-0 flex-col gap-px" data-tools="front above under"></div>
        </div>
      </div>

      <!-- command line -->
      <div class="mr-0.5 flex border-t-2 border-[#303a43] font-['DejaVu_Sans_Mono',monospace]">
        <div class="flex w-6 shrink-0 flex-col items-center justify-between text-white">
          <div class="mt-1 h-[3px] w-4 border-y-2 border-dotted border-[#c3c8cc]"></div>
          <button aria-label="Close command line"><svg class="size-3" fill="none" stroke="currentColor"><use href="#close" /></svg></button>
          <button aria-label="Customize" class="mb-1"><svg class="size-4" fill="none" stroke="currentColor"><use href="#wrench" /></svg></button>
        </div>
        <div class="min-w-0 flex-1">
          <div class="border-b border-[#454b4e] bg-[#c5c8c3] px-0.5 pt-1 leading-[13px] text-[#16191a]"><p>Analyzing internal islands...</p><p>Pick internal point or [Select objects/remove Boundaries]:</p></div>
          <label class="flex h-5 items-center gap-1 bg-white px-1">
            <svg viewBox="0 0 24 12" class="w-6" fill="none" stroke="#444"><path d="M.5 1.500h13v9H.5zM2 4l2 2-2 2M5.500 8.500h3" /><path d="M16 4h7l-3.500 4z" fill="#444" stroke="none" /></svg>
            <input type="text" placeholder="Type a command" aria-label="Command" class="min-w-0 flex-1 italic outline-none placeholder:text-[#77797a]" />
          </label>
        </div>
      </div>

      <div class="flex h-[17px] items-start gap-1 pl-[14px] text-[#b6bcc1]">
        <button class="rounded-b-lg bg-[#35414d] px-2 font-bold text-white">Model</button>
        <button class="rounded-b-lg bg-[#2b353f] px-2">Layout1</button>
        <button class="rounded-b-lg bg-[#2b353f] px-2">Layout2</button>
        <button class="rounded-b-lg bg-[#2b353f] px-2 text-sm leading-4">+</button>
      </div>

      <div class="flex h-[27px] items-center justify-end gap-1 pr-1 whitespace-nowrap text-[#d6dadc]">
        <div class="flex h-[21px] items-center gap-px bg-[#323d48]" data-active="ortho track osnap" data-tools="modelsp dyn ortho polar v _ track osnap v lwt transp"></div>
        <div class="flex h-[21px] items-center bg-[#323d48]"><div class="flex items-center gap-0.5" data-active="annovis" data-tools="annovis annoauto annoscale"></div><button class="flex items-center gap-1 pl-1">1:1 / 100% <svg class="size-2"><use href="#caret" /></svg></button></div>
        <div class="flex h-[21px] items-center bg-[#323d48]" data-tools="gear v"></div>
        <div class="flex h-[21px] items-center bg-[#323d48]"><svg class="mx-1 size-4"><use href="#ruler" /></svg><button class="flex items-center gap-3 px-1">Decimal <svg class="size-2"><use href="#caret" /></svg></button></div>
        <div class="flex h-[21px] items-center gap-0.5 bg-[#323d48] pr-0.5" data-active="isolate" data-tools="qprops isolate perf isodraft"></div>
        <div class="flex h-[21px] items-center gap-px bg-[#323d48]" data-tools="clean menu"></div>
      </div>
    </div>

    <!-- windows taskbar -->
    <footer class="ml-0.5 flex h-9 shrink-0 bg-[#06202e] text-white">
      <button aria-label="Start menu" class="flex w-10 shrink-0 items-center justify-center"><svg viewBox="0 0 16 16" class="size-4" fill="#fff"><path d="M1 3l6-1v5.500H1zM8 2l7-1v6.500H8zM1 8.500h6V14l-6-1zM8 8.500h7V15l-7-1z" /></svg></button>
      <label class="mt-px flex w-[302px] shrink-0 items-center gap-2 bg-[#f1f4f4] px-2.5 text-[#2a2f33]">
        <svg viewBox="0 0 16 16" class="size-4" fill="none" stroke="currentColor"><circle cx="10" cy="6" r="4.500" /><path d="M6.500 9.500L1 15" /></svg>
        <input type="search" placeholder="Type here to search" aria-label="Search Windows" class="min-w-0 flex-1 text-[12px] outline-none placeholder:text-[#474b4f]" />
      </label>
      <div class="flex">
        <button aria-label="Cortana" class="flex w-[43px] items-center justify-center"><svg viewBox="0 0 24 24" class="size-6"><circle cx="12" cy="12" r="5.500" fill="none" stroke="#fff" stroke-width="1.800" /></svg></button>
        <button aria-label="Task view" class="flex w-[43px] items-center justify-center"><svg viewBox="0 0 24 24" class="size-6" fill="none" stroke="#d7dce0"><path d="M5.500 5v3h8V5M5.500 19v-3h8v3M5.500 9.500h8v5h-8zM17.500 5v3M17.500 11v8M16 9.500h3" stroke-width="1.300" /></svg></button>
        <button aria-label="Store" class="flex w-[43px] items-center justify-center"><svg viewBox="0 0 24 24" class="size-6"><path d="M8 7V3h8v4" fill="none" stroke="#3a9adf" stroke-width="1.800" /><path d="M2 6h20v14q0 2-2 2H4q-2 0-2-2z" fill="#f2f2f0" /><path d="M8 9h4v4H8z" fill="#e4572e" /><path d="M12.500 9h4v4h-4z" fill="#7ab829" /><path d="M8 13.500h4v4H8z" fill="#2d9fd8" /><path d="M12.500 13.500h4v4h-4z" fill="#f2b51d" /></svg></button>
        <button aria-label="Coc Coc" class="flex w-[43px] items-center justify-center"><svg viewBox="0 0 24 24" class="size-6"><circle cx="11.500" cy="13" r="9" fill="#65b949" /><path d="M15 9a5.500 5.500 0 1 0 2 5" fill="none" stroke="#eaf6dd" stroke-width="2" /><circle cx="11.500" cy="13" r="2" fill="#d7efcf" /><path d="M13 6l1-3M16 8l3-4M18 10l3-2" stroke="#f1f6ee" stroke-width="1.500" /></svg></button>
        <button aria-label="Edge" class="flex w-[43px] items-center justify-center"><svg viewBox="0 0 24 24" class="size-6"><circle cx="12" cy="12" r="10.500" fill="#167bd0" /><path d="M2 9C5 0 19-1 22 9c2 6-4 8-8 6 2-4-1-8-6-7-3 0-5 1-6 1z" fill="#4ccf9a" /><path d="M2 9c2-5 9-8 14-3-4-1-11 1-10 8 0 4 3 7 6 8.500C5 23 0 16 2 9z" fill="#2fa9e0" /><path d="M9 13c0 5 6 7 12 4-3 5-13 4-12-4z" fill="#0b3d7e" /></svg></button>
        <button aria-label="File Explorer" class="flex w-[43px] flex-col items-center justify-end"><svg viewBox="0 0 24 24" class="my-1 size-6"><path d="M3 4h7l2 2h9v14H3z" fill="#f3c05a" /><path d="M3 8h18v12H3z" fill="#ffd978" /><path d="M6 13h12v8h-3v-4H9v4H6z" fill="#4a90b9" /></svg><span class="h-[3px] w-9 bg-[#86b9dc]"></span></button>
        <button aria-label="CorelDRAW" class="flex w-[43px] items-center justify-center"><svg viewBox="0 0 24 24" class="size-6"><circle cx="12" cy="12" r="10.500" fill="#5db82c" /><path d="M3 6c6 0 9 5 12 14-3 1-5-1-6-3z" fill="#fff" /><path d="M4 5l9 14" stroke="#2d7514" /><path d="M5 4c8 0 13 5 14 11" fill="none" stroke="#bfe38c" stroke-width="1.500" /></svg></button>
        <button aria-label="Excel" class="flex w-[43px] flex-col items-center justify-end"><svg viewBox="0 0 24 24" class="my-1 size-6"><path d="M12 4h10v16H12z" fill="#e8f2ec" /><path d="M13 7.500h8M13 11h8M13 14.500h8M17 5v14" stroke="#27774b" stroke-width="1.500" /><path d="M2 5l12-2v18L2 19z" fill="#1e7145" /><path d="M5 8.500l5 7M10 8.500l-5 7" stroke="#fff" stroke-width="1.800" /></svg><span class="h-[3px] w-9 bg-[#86b9dc]"></span></button>
        <button aria-label="WordPad" class="flex w-[43px] flex-col items-center justify-end"><svg viewBox="0 0 24 24" class="my-1 size-6"><path d="M5 3h14v15H5z" fill="#e3ecf4" /><path d="M7 7.500h4M7 10.500h4M7 13.500h10" stroke="#4a85b7" /><path d="M12 6h5v5h-5z" fill="#d89a62" /><path d="M4 17h14l2 4H6z" fill="#8aa9c4" /></svg><span class="h-[3px] w-9 bg-[#86b9dc]"></span></button>
        <button aria-label="AutoCAD" class="flex w-[43px] flex-col items-center justify-end bg-[#0d4f80]"><svg viewBox="0 0 24 24" class="my-1 size-6"><path d="M2 2h20v20H2z" fill="#f3ebe9" /><path d="M5 19l5-14h4l5 14h-4l-1-4h-4l-1 4zM11 12h2l-1-4z" fill="#b41f24" fill-rule="evenodd" /></svg><span class="h-[3px] w-full bg-[#86c2ea]"></span></button>
        <button aria-label="Sticky Notes" class="flex w-[43px] flex-col items-center justify-end"><svg viewBox="0 0 24 24" class="my-1 size-6"><path d="M2 6l17-3 3 14L6 21z" fill="#b4ca72" /><path d="M3 7l9 5 7-8" fill="none" stroke="#c9da90" /></svg><span class="h-[3px] w-9 bg-[#86b9dc]"></span></button>
        <button aria-label="Recorder" class="flex w-[43px] flex-col items-center justify-end"><svg viewBox="0 0 24 24" class="my-1 size-6"><circle cx="8" cy="6" r="4.500" fill="#1e2021" stroke="#6d7274" /><circle cx="8" cy="5" r="1.500" fill="#c9cdce" /><path d="M7 10l3 11" stroke="#5a5550" stroke-width="3" /><path d="M11 9l9 1v8l-9-1z" fill="#6f7d3a" /><path d="M14 8v9" stroke="#302f22" stroke-width="2" /></svg><span class="h-[3px] w-9 bg-[#86b9dc]"></span></button>
      </div>
      <div class="ml-auto flex items-center text-[#e8ecee]">
        <svg viewBox="0 0 24 24" class="size-6"><path d="M6 3c0 5 3 7 8 7-2 4-8 5-11 1-1-3 0-6 3-8z" fill="#f4c542" /><path d="M6 20c-5 0-5-6 0-6 1-5 9-5 10 0 6-1 7 6 2 6z" fill="#d4e9f7" /></svg>
        <span class="mx-1 text-[12px]">25°C</span>
        <button aria-label="Hidden icons" class="mx-2"><svg viewBox="0 0 16 16" class="size-4" fill="none" stroke="#fff"><path d="M3 10l5-5 5 5" stroke-width="1.300" /></svg></button>
        <div class="flex gap-[5px]">
          <svg viewBox="0 0 16 16" class="size-4" fill="none" stroke="#e6eaec"><path d="M3.500 5.500h6v6h-6zM10 7.500l3-1.500v5l-3-1.500M4 2.500h6M4 14.500h6M2 5c-1 2-1 5 0 7" /></svg>
          <svg viewBox="0 0 16 16" class="size-4" fill="none" stroke="#e6eaec"><path d="M1 3.500h4v3H1zM3 7v5M2 2v2M4 2v2M6 4.500h8v7H5M14 7h1v2M7.500 6l4 4M11.500 6l-4 4" /></svg>
          <svg viewBox="0 0 16 16" class="size-4" fill="none" stroke="#e6eaec"><path d="M5 3.500h10v7H4M9.500 11v3M6 14.500h7M1.500 2.500h3v4h-3zM3 7v7" /></svg>
          <svg viewBox="0 0 16 16" class="size-4" fill="none" stroke="#e6eaec"><path d="M1.500 6h2.500l3-3v10l-3-3H1.500zM9 6c1 1 1 3 0 4M11 4.500c2 2 2 5 0 7" /><path d="M13 3c3 3 3 7 0 10" stroke="#6d7b84" /></svg>
        </div>
        <div class="ml-2 leading-[15px]"><p>ENG</p><p>INTL</p></div>
        <div class="ml-2.5 h-[30px] w-[51px] bg-linear-to-b from-[#4d5960] via-[#66686a] to-[#747171]"></div>
        <button aria-label="Notifications" class="mr-3 ml-2.5"><svg viewBox="0 0 24 24" class="size-6"><path d="M2 3h16v12H9l-3 3v-3H2z" fill="#f0f2f2" /><path d="M5 6.500h10M5 9.500h10M5 12.500h5" stroke="#32424d" /><circle cx="16" cy="17" r="6.500" fill="#1d5c88" stroke="#8fbcd9" /><text x="16" y="20.500" text-anchor="middle" fill="#fff" class="text-[10px] font-bold">9</text></svg></button>
      </div>
    </footer>

    <script>
      // "|" separator, ":" grip, "v" small drop-down arrow, "_" gap, anything else is an icon id
      const icon = (id, size) =>
        `<svg class="${size}" fill="none" stroke="currentColor"><use href="#${id}"/></svg>`;

      document.querySelectorAll("[data-tools]").forEach((bar) => {
        const active = (bar.dataset.active || "").split(" ");
        bar.innerHTML = bar.dataset.tools
          .split(" ")
          .map((id) => {
            if (id === "|") return '<span class="mr-[3px] ml-[2px] h-4 w-px shrink-0 bg-[#56616b]"></span>';
            if (id === ":") return '<span class="mx-0.5 h-4 w-[4px] shrink-0 border-x-2 border-dotted border-[#6d7780]"></span>';
            if (id === "_") return '<span class="w-1"></span>';
            if (id === "v") return `<button aria-label="More" class="flex w-3 shrink-0 justify-center">${icon("caret", "size-2")}</button>`;
            const bg = active.includes(id) ? "bg-[#5587b8] text-white h-[19px]" : "h-[18px]";
            return `<button aria-label="${id}" class="flex w-5 shrink-0 items-center justify-center ${bg}">${icon(id, "size-4")}</button>`;
          })
          .join("");
      });
    </script>
  </body>
</html>
